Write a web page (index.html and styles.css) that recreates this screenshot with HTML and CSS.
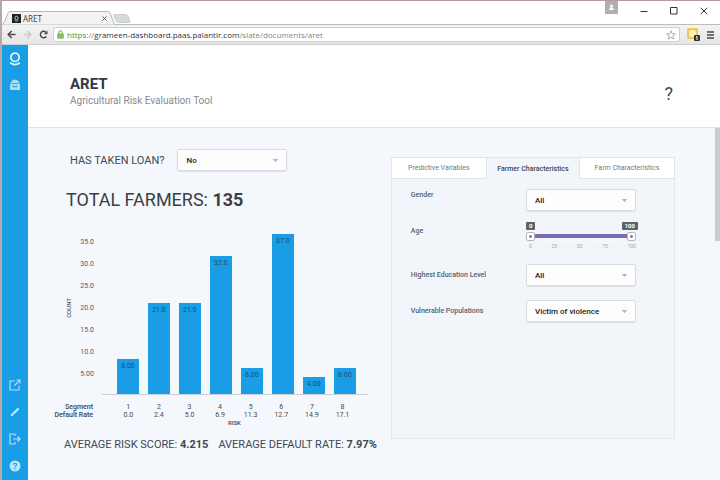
FILE: index.html
```html
<!DOCTYPE html>
<html lang="en">
<head>
<meta charset="utf-8">
<title>ARET</title>
<link rel="stylesheet" href="styles.css">
</head>
<body>
<div class="window">
  <header class="titlebar">
    <div class="tab">
      <svg class="tab-shape" viewBox="0 0 115 14" preserveAspectRatio="none" aria-hidden="true"><path d="M0 13.5Q2 13 3 10L6 2Q7 .5 8 .5H107Q109 .5 110 2L113 10Q114 13 115 13.5" fill="#f3f3f3" stroke="#b5b5b5"/></svg>
      <svg class="favicon" viewBox="0 0 9 9" aria-hidden="true"><path d="M0 0H9V9H0Z" fill="#222"/><circle cx="4.5" cy="4" r="1.7" fill="none" stroke="#ddd" stroke-width=".8"/><path d="M2.7 6.6Q4.5 7.6 6.3 6.6" fill="none" stroke="#ddd" stroke-width=".7"/></svg>
      <span class="tab-name">ARET</span>
      <button class="plain" aria-label="Close tab"><svg width="5" height="5" viewBox="0 0 5 5"><path d="M.5.5L4.5 4.5M4.5.5L.5 4.5" stroke="#555"/></svg></button>
    </div>
    <button class="plain new-tab" aria-label="New tab"><svg width="18" height="9" viewBox="0 0 18 9"><path d="M2 .5H12Q14 .5 15 2L17 7Q17.300 8.500 16 8.500H6Q4 8.500 3 7L.8 2Q.5.500 2 .5Z" fill="#d5dadd" stroke="#c9ced2"/></svg></button>
    <div class="window-buttons">
      <button class="plain user" aria-label="User"><svg width="13" height="13" viewBox="0 0 13 13"><path d="M0 0H13V13H0Z" fill="#b3b0b0"/><circle cx="6.500" cy="5" r="1.500" fill="#fff"/><path d="M4 9Q4 6.500 6.500 6.500T9 9Z" fill="#fff"/></svg></button>
      <button class="plain" aria-label="Minimize"><svg width="8" height="8" viewBox="0 0 8 8"><path d="M.5 4.500H7.500" stroke="#333"/></svg></button>
      <button class="plain" aria-label="Maximize"><svg width="8" height="8" viewBox="0 0 8 8"><path d="M.5 .5H7V7H.5Z" fill="none" stroke="#333"/></svg></button>
      <button class="plain" aria-label="Close"><svg width="8" height="8" viewBox="0 0 8 8"><path d="M.7.700L7.300 7.300M7.300.700L.7 7.300" stroke="#333"/></svg></button>
    </div>
  </header>
  <nav class="toolbar" aria-label="Browser">
    <button class="plain" aria-label="Back"><svg width="9" height="9" viewBox="0 0 9 9"><path d="M8.500 4.500H1.500M4.700 1L1.200 4.500L4.700 8" fill="none" stroke="#4b4b4b" stroke-width="1.500"/></svg></button>
    <button class="plain" aria-label="Forward"><svg width="9" height="9" viewBox="0 0 9 9"><path d="M.5 4.500H7.500M4.300 1L7.800 4.500L4.300 8" fill="none" stroke="#c9c9c9" stroke-width="1.500"/></svg></button>
    <button class="plain" aria-label="Reload"><svg width="9" height="9" viewBox="0 0 9 9"><path d="M7.300 6.300A3.200 3.200 0 1 1 6.900 2.300" fill="none" stroke="#4b4b4b" stroke-width="1.500"/><path d="M8.500.500V4.200H4.800Z" fill="#4b4b4b"/></svg></button>
    <div class="address">
      <svg width="7" height="9" viewBox="0 0 7 9" aria-hidden="true"><path d="M1.800 4V2.500A1.700 1.700 0 0 1 5.200 2.500V4" fill="none" stroke="#8fbf72" stroke-width="1.200"/><path d="M.3 3.700H6.700V8.600H.3Z" fill="#6fb04b"/><path d="M1.300 5.300H5.700M1.300 7H5.700" stroke="#a8d68a" stroke-width=".7"/></svg>
      <span class="url" role="textbox" aria-label="Address"><span class="secure">https</span><span class="path">://</span>grameen-dashboard.paas.palantir.com<span class="path">/slate/documents/aret</span></span>
      <button class="plain" aria-label="Bookmark"><svg width="10" height="10" viewBox="0 0 10 10"><path d="M5 .8L6.200 3.700L9.400 3.900L6.900 5.900L7.700 9L5 7.300L2.300 9L3.100 5.900L.6 3.900L3.800 3.700Z" fill="#fff" stroke="#999" stroke-width=".8"/></svg></button>
    </div>
    <button class="plain extension" aria-label="Extension"><svg width="13" height="13" viewBox="0 0 13 13"><rect width="11" height="11" rx="1" fill="#eccb58"/><rect x="2" y="2" width="7" height="7" rx="3" fill="#fff3bd"/><rect x="7" y="7" width="6" height="6" rx="1" fill="#333"/><path d="M9 9L10 8.500V12" stroke="#fff" fill="none"/></svg></button>
    <button class="plain" aria-label="Menu"><svg width="8" height="8" viewBox="0 0 8 8"><path d="M0 1H7M0 4H7M0 7H7" stroke="#4b4b4b" stroke-width="1.500"/></svg></button>
  </nav>
  <div class="page">
    <nav class="sidebar" aria-label="Main">
      <a href="#home" aria-label="Home"><svg width="12" height="14" viewBox="0 0 12 14" fill="none" stroke="#e9f7ff" stroke-width="1.700"><circle cx="6" cy="5.300" r="4.200"/><path d="M1.200 10.800Q6 14.300 10.800 10.800"/></svg></a>
      <a href="#apps" aria-label="Applications"><svg width="12" height="12" viewBox="0 0 12 12"><path d="M3 2.500L4 .7H8L9 2.500H10.200V4H1.800V2.500ZM1 4.700H11V11H1Z" fill="#a9def8"/><path d="M4 6.500V7.800H8V6.500" fill="none" stroke="#199de5"/></svg></a>
      <span class="spacer"></span>
      <a href="#open" aria-label="Open"><svg width="12" height="12" viewBox="0 0 12 12" fill="none" stroke="#b4e2fa" stroke-width="1.100"><path d="M6 2H1V11H10V6.500M7.500 1H11V4.500M11 1L5.500 6.500"/></svg></a>
      <a href="#edit" aria-label="Edit"><svg width="12" height="12" viewBox="0 0 12 12"><path d="M1.500 10.500L2.200 8.300L8.700 1.800L10.300 3.300L3.700 9.800Z" fill="#c5e9fc"/></svg></a>
      <a href="#exit" aria-label="Sign out"><svg width="12" height="12" viewBox="0 0 12 12" fill="none" stroke="#b4e2fa" stroke-width="1.200"><path d="M6 3V1H1V11H6V9M4 6H11M8.500 3.500L11 6L8.500 8.500"/></svg></a>
      <a href="#help" aria-label="Help"><svg width="12" height="12" viewBox="0 0 12 12"><circle cx="6" cy="6" r="5.500" fill="#b9e6fc"/><path d="M4.300 4.800Q4.300 3.200 6 3.200T7.700 4.700Q7.700 5.500 6 6.300V7.200M6 8V9.200" fill="none" stroke="#199de5" stroke-width="1.100"/></svg></a>
    </nav>
    <main>
      <header class="heading">
        <div>
          <h1>ARET</h1>
          <p>Agricultural Risk Evaluation Tool</p>
        </div>
        <button class="plain question">?</button>
      </header>
      <div class="body">
        <div class="content">
          <section class="overview">
            <div class="loan">
              <label for="loan">HAS TAKEN LOAN?</label>
              <select id="loan"><option>No</option></select>
            </div>
            <h2>TOTAL FARMERS: <b>135</b></h2>
            <div class="chart">
              <span class="count">COUNT</span>
              <div class="scale"><span>35.0</span><span>30.0</span><span>25.0</span><span>20.0</span><span>15.0</span><span>10.0</span><span>5.00</span></div>
              <div class="bars">
                <div class="bar" style="height:20%">8.00</div>
                <div class="bar" style="height:52.5%">21.0</div>
                <div class="bar" style="height:52.5%">21.0</div>
                <div class="bar" style="height:80%">32.0</div>
                <div class="bar" style="height:15%">6.00</div>
                <div class="bar" style="height:92.5%">37.0</div>
                <div class="bar" style="height:10%">4.00</div>
                <div class="bar" style="height:15%">6.00</div>
              </div>
            </div>
            <table>
              <tr><th scope="row">Segment</th><td>1</td><td>2</td><td>3</td><td>4</td><td>5</td><td>6</td><td>7</td><td>8</td></tr>
              <tr><th scope="row">Default Rate</th><td>0.0</td><td>2.4</td><td>5.0</td><td>6.9</td><td>11.3</td><td>12.7</td><td>14.9</td><td>17.1</td></tr>
            </table>
            <div class="risk">RISK</div>
            <div class="averages">
              <span>AVERAGE RISK SCORE: <b>4.215</b></span>
              <span>AVERAGE DEFAULT RATE: <b>7.97%</b></span>
            </div>
          </section>
          <section class="panel">
            <div class="tabs" role="tablist">
              <button role="tab" aria-selected="false">Predictive Variables</button>
              <button role="tab" aria-selected="true">Farmer Characteristics</button>
              <button role="tab" aria-selected="false">Farm Characteristics</button>
            </div>
            <form class="filters">
              <label class="raised" for="gender">Gender</label>
              <select id="gender"><option>All</option></select>
              <label class="raised" for="age-min">Age</label>
              <div class="slider">
                <input id="age-min" type="range" min="0" max="100" value="0">
                <input type="range" min="0" max="100" value="100" aria-label="Maximum age">
                <output class="tag low" for="age-min">0</output>
                <output class="tag high">100</output>
                <div class="ticks"><span>0</span><i>·</i><i>·</i><i>·</i><i>·</i><span>25</span><i>·</i><i>·</i><i>·</i><i>·</i><span>50</span><i>·</i><i>·</i><i>·</i><i>·</i><span>75</span><i>·</i><i>·</i><i>·</i><i>·</i><span>100</span></div>
              </div>
              <label for="education">Highest Education Level</label>
              <select id="education"><option>All</option></select>
              <label for="vulnerable">Vulnerable Populations</label>
              <select id="vulnerable"><option>Victim of violence</option></select>
            </form>
          </section>
        </div>
        <div class="scrollbar" aria-hidden="true"></div>
      </div>
    </main>
  </div>
</div>
</body>
</html>
```
FILE: styles.css
```css
* { box-sizing: border-box; }
body { margin: 0; font-family: Roboto, "Liberation Sans", sans-serif; color: #414852; }
h1, h2, p { margin: 0; font-weight: 400; }
b { font-weight: 700; }
button, select { font-family: inherit; }
svg { display: block; flex: none; }
.plain { padding: 0; border: 0; background: none; color: inherit; }
.window { display: flex; flex-direction: column; min-height: 100vh; border-top: 1px solid #b59c9c; border-left: 2px solid #b7a9a9; background: #fff; }

/* Browser frame */
.titlebar { display: flex; height: 24px; border-bottom: 1px solid #bcbcbc; }
.tab { position: relative; display: flex; align-items: center; gap: 2px; width: 113px; height: 14px; margin-top: 10px; padding: 0 8px 0 10px; font: 8px "Noto Sans", sans-serif; color: #444; }
.tab-shape { position: absolute; inset: 0; width: 100%; height: 100%; }
.favicon { position: relative; width: 9px; height: 9px; }
.tab-name { position: relative; flex: 1; }
.tab button { position: relative; }
.new-tab { align-self: end; margin-bottom: 1px; margin-left: -2px; }
.window-buttons { display: flex; align-items: center; gap: 22px; margin-left: auto; padding-right: 12px; }
.window-buttons .plain { margin-bottom: 4px; }
.window-buttons .user { align-self: start; }
.toolbar { display: flex; align-items: center; gap: 7px; height: 20px; padding: 0 5px; background: linear-gradient(#f3f3f3, #e6e6e6); border-bottom: 1px solid #cfcfcf; }
.address { display: flex; flex: 1; align-items: center; gap: 3px; height: 15px; margin-left: -2px; padding: 0 3px; background: #fff; border: 1px solid #d0d0d0; border-radius: 2px; }
.url { flex: 1; font: 8px "Open Sans", sans-serif; color: #333; }
.secure { color: #3c9a2b; }
.path { color: #858585; }

/* Page frame */
.page { display: flex; flex: 1; }
.sidebar { display: flex; flex-direction: column; align-items: center; gap: 15px; width: 26px; padding: 7px 0 8px; background: #199de5; }
.sidebar a:first-child { margin-bottom: -2px; }
.spacer { flex: 1; }
main { display: flex; flex: 1; flex-direction: column; min-width: 0; }
.heading { display: flex; align-items: center; justify-content: space-between; height: 83px; padding: 11px 47px 0 42px; border-bottom: 1px solid #dde3e8; background: #fff; }
.heading h1 { font-size: 15px; line-height: 18px; font-weight: 700; color: #303947; }
.heading p { font-size: 10px; line-height: 16px; color: #858b92; }
.question { margin-top: 4px; font-size: 18px; line-height: 20px; }
.body { display: flex; flex: 1; background: #f4f7fb; }
.content { display: grid; flex: 1; grid-template-columns: minmax(0, 8fr) minmax(0, 7fr); gap: 13px; align-items: start; padding: 21px 40px 20px 25px; min-width: 0; }
.scrollbar { width: 5px; height: 113px; background: #c9cdd1; }

select { appearance: none; width: 110px; height: 22px; padding: 0 8px; border: 1px solid #d8dce1; border-radius: 2px; background: conic-gradient(from -45deg at 50% 100%, #b5bac0 90deg, transparent 0) right 8px center / 5px 3px no-repeat, #fdfdfe; box-shadow: 0 1px 1px #dfe2e6; font-size: 8px; font-weight: 500; color: #222; }

/* Overview and chart */
.loan { display: flex; align-items: center; gap: 13px; padding-left: 17px; }
.loan label { font-size: 11px; white-space: nowrap; }
.overview h2 { padding: 17px 0 0 13px; font-size: 18px; line-height: 24px; color: #3b3f45; }
.chart { display: flex; height: 174px; margin: 9px 10px 0 12px; font-size: 7px; color: #555c65; }
.count { align-self: center; width: 8px; writing-mode: vertical-rl; transform: rotate(180deg); font-size: 6px; line-height: 8px; font-weight: 500; }
.scale { display: grid; flex: none; grid-auto-rows: 1fr; align-items: center; width: 21px; margin-right: 8px; padding: 11px 0 10px; text-align: right; line-height: 9px; }
.bars { display: flex; flex: 1; align-items: end; gap: 9px; padding: 0 12px 0 15px; border-bottom: 1px solid #cbd0d5; }
.bar { flex: 1; padding-top: 3px; background: #199de5; text-align: center; line-height: 8px; color: #1c4e79; }
table { width: 100%; margin-top: 8px; padding-right: 20px; border-spacing: 0; table-layout: fixed; font-size: 7px; line-height: 8px; }
th { width: 60px; padding: 0 20px 0 0; text-align: right; font-weight: 500; white-space: nowrap; }
td { padding: 0; text-align: center; }
.risk { padding-left: 38px; font-size: 6px; line-height: 7px; font-weight: 500; text-align: center; }
.averages { display: flex; gap: 10px; padding: 12px 0 0 11px; font-size: 11px; line-height: 14px; white-space: nowrap; }

/* Filter panel */
.panel { min-height: 282px; margin-top: 8px; border: 1px solid #e0e5eb; background: #f2f6fa; }
.tabs { display: grid; grid-template-columns: repeat(3, 1fr); height: 21px; }
.tabs button { padding: 0; border: 0; border-bottom: 1px solid #e0e5eb; background: #fff; font-size: 7px; color: #717981; }
.tabs button[aria-selected="true"] { border: solid #e0e5eb; border-width: 0 1px; background: #f2f6fa; font-weight: 500; color: #3e4854; }
.filters { display: grid; grid-template-columns: 1fr 110px; gap: 14px 0; align-items: center; padding: 10px 38px 0 19px; }
.filters label { font-size: 7px; font-weight: 500; line-height: 10px; color: #53616f; }
.filters .raised { align-self: start; padding-top: 1px; }
.slider { position: relative; display: grid; height: 25px; grid-template-rows: 11px 14px; }
.slider input { grid-area: 1 / 1; appearance: none; width: 100%; height: 10px; margin: 6px 0 0; background: linear-gradient(#7a6db2, #7a6db2) center / calc(100% - 10px) 4px no-repeat; pointer-events: none; }
.slider input + input { background: none; }
.slider input::-webkit-slider-thumb { appearance: none; width: 9px; height: 9px; border: 1px solid #b4b8bd; border-radius: 2px; background: radial-gradient(circle, #888 1px, #fff 2px); pointer-events: auto; }
.tag { position: absolute; top: -3px; padding: 0 3px; border-radius: 1px; background: #5f6369; color: #fff; font-size: 6px; line-height: 8px; font-weight: 700; }
.low { left: 0; }
.high { right: -2px; }
.ticks { display: flex; align-items: end; justify-content: space-between; padding: 0 0 0 3px; font-size: 5px; line-height: 7px; color: #a1a6ad; }
.ticks i { font-style: normal; }
```
